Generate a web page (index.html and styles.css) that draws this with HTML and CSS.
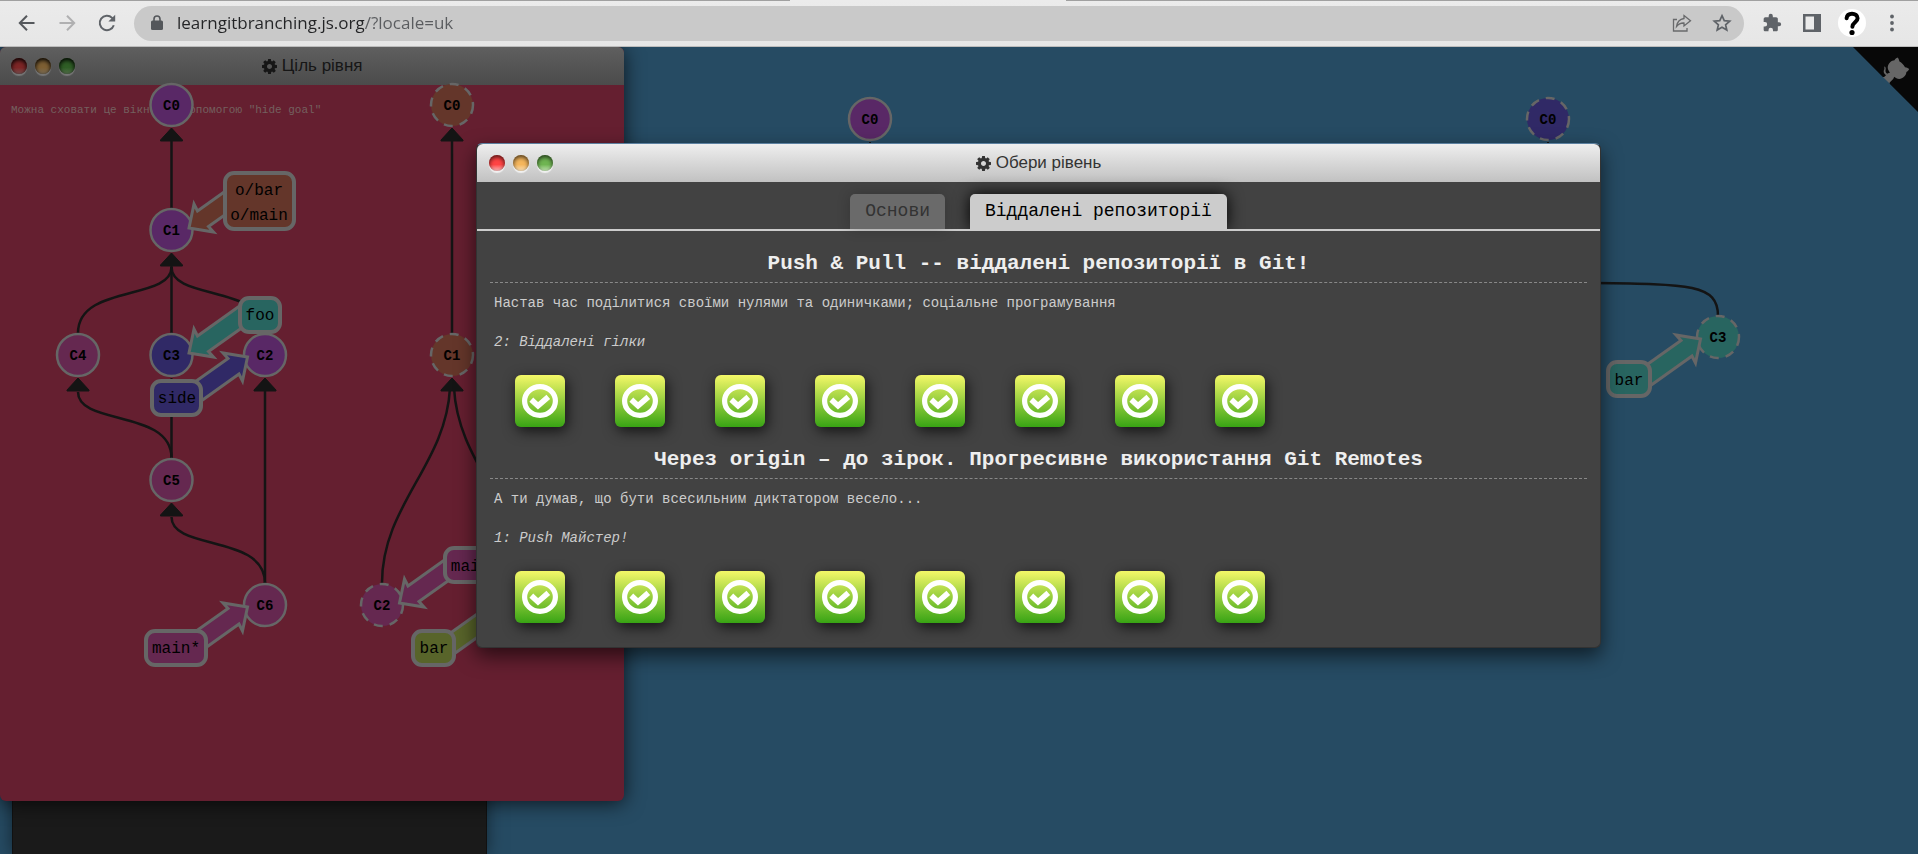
FILE: index.html
```html
<!DOCTYPE html>
<html lang="uk">
<head>
<meta charset="utf-8">
<meta name="viewport" content="width=device-width, initial-scale=1">
<title>Learn Git Branching</title>
<link rel="stylesheet" href="styles.css">
</head>
<body>
<svg class="defs" width="0" height="0" aria-hidden="true">
  <defs>
    <symbol id="cog" viewBox="0 0 1536 1536"><path d="M1024 768q0-106-75-181t-181-75-181 75-75 181 75 181 181 75 181-75 75-181zm512-109v222q0 12-8 23t-20 13l-185 28q-19 54-39 91 35 50 107 138 10 12 10 25t-9 23q-27 37-99 108t-94 71q-12 0-26-9l-138-108q-44 23-91 38-16 136-29 186-7 28-36 28h-222q-14 0-24.5-8.5t-11.5-21.5l-28-184q-49-16-90-37l-141 107q-10 9-25 9-14 0-25-11-126-114-165-168-7-10-7-23 0-12 8-23 15-21 51-66.5t54-70.5q-27-50-41-99l-183-27q-13-2-21-12.500t-8-23.500v-222q0-12 8-23t19-13l186-28q14-46 39-92-40-57-107-138-10-12-10-24 0-10 9-23 26-36 98.500-107.500t94.500-71.500q13 0 26 10l138 107q44-23 91-38 16-136 29-186 7-28 36-28h222q14 0 24.500 8.500t11.500 21.500l28 184q49 16 90 37l142-107q9-9 24-9 13 0 25 10 129 119 165 170 7 8 7 22 0 12-8 23-15 21-51 66.500t-54 70.500q26 50 41 98l183 28q13 2 21 12.500t8 23.500z"/></symbol>
    <symbol id="done" viewBox="0 0 36 34"><ellipse cx="18" cy="17" rx="15.400" ry="14.400" fill="none" stroke="#fff" stroke-width="5.200"/><path d="M9.300 15.600 16 21.800 26.300 12.800" fill="none" stroke="#fff" stroke-width="5.600"/></symbol>
    <path id="head" class="head" d="M0 0 11 12V13H-11V12Z"/>
    <path id="link" class="edge" d="M0 0C0 -49 93.500 -32 93.500 -66"/>
    <polygon id="pointer" points="73,-52.500 26,-19 22.500,-26 17.500,-2 42,2 37,-3.500 73,-29"/>
  </defs>
</svg>

<header class="toolbar">
  <button class="tool" aria-label="Назад"><svg width="20" height="20" viewBox="0 0 20 20"><path d="M17.500 10H3.500M10 2.800 2.800 10l7.200 7.200" fill="none" stroke="#55585c" stroke-width="2"/></svg></button>
  <button class="tool" aria-label="Вперед"><svg width="20" height="20" viewBox="0 0 20 20"><path d="M2.500 10h14M10 2.800l7.200 7.200-7.200 7.200" fill="none" stroke="#b0b0b1" stroke-width="2"/></svg></button>
  <button class="tool" aria-label="Оновити"><svg width="20" height="20" viewBox="0 0 20 20"><path d="M16.800 12.200A7.200 7.200 0 1 1 15.100 4.900L17 6.800" fill="none" stroke="#5f6368" stroke-width="2"/><path d="M18.200 1.800V8.600H11.400Z" fill="#5f6368"/></svg></button>
  <form class="address">
    <svg width="12" height="16" viewBox="0 0 12 16"><path d="M1.500 5.500h9q1.500 0 1.500 1.500v6.500q0 1.500-1.500 1.500h-9Q0 15 0 13.500V7q0-1.500 1.500-1.500Z" fill="#54575b"/><path d="M3 6.500V4a3 3 0 0 1 6 0v2.500" fill="none" stroke="#54575b" stroke-width="1.600"/></svg>
    <input class="url" type="text" aria-label="Адреса" value="learngitbranching.js.org/?locale=uk">
    <button type="button" class="tool" aria-label="Поділитися"><svg width="20" height="20" viewBox="0 0 20 20"><path d="M5 6.500H1.500v11.500h13.500v-3M12 2.500l6.500 5.200L12 13V10q-4.500-.3-7.500 3.500Q5.500 6.500 12 5.500Z" fill="none" stroke="#68696b" stroke-width="1.300"/></svg></button>
    <button type="button" class="tool" aria-label="Закладка"><svg width="20" height="20" viewBox="0 0 20 20"><path d="M10 2.700l2.250 5 5.450.5-4.100 3.600 1.200 5.300L10 14.300l-4.800 2.800 1.200-5.300L2.300 8.200l5.450-.5Z" fill="none" stroke="#5f6368" stroke-width="1.700"/></svg></button>
  </form>
  <button class="tool" aria-label="Розширення"><svg width="20" height="20" viewBox="0 0 24 24"><path d="M20.500 11H19V7c0-1.100-.9-2-2-2h-4V3.500a2.500 2.500 0 0 0-5 0V5H4a2 2 0 0 0-2 2v3.800h1.500a2.700 2.700 0 0 1 0 5.400H2V20c0 1.100.9 2 2 2h3.800v-1.500a2.700 2.700 0 0 1 5.400 0V22H17c1.100 0 2-.9 2-2v-4h1.500a2.500 2.500 0 0 0 0-5Z" fill="#5f6368"/></svg></button>
  <button class="tool" aria-label="Бічна панель"><svg width="20" height="20" viewBox="0 0 20 20"><path d="M1 1h18v18H1Z" fill="#5f6368"/><path d="M3.500 3.500H12v13H3.500Z" fill="#ebebeb"/></svg></button>
  <button class="tool profile" aria-label="Профіль"><svg width="28" height="28" viewBox="0 0 28 28"><circle cx="14" cy="14" r="14" fill="#fff"/><path d="M8.600 9.300C9 6 11 4.800 14 4.800c3 0 5.600 1.500 5.600 4.500 0 3.900-5.200 4.200-5.200 8.500" fill="none" stroke="#000" stroke-width="4" stroke-linecap="round"/><circle cx="14" cy="23.500" r="2.600"/></svg></button>
  <button class="tool" aria-label="Меню"><svg width="20" height="20" viewBox="0 0 20 20" fill="#5f6368"><circle cx="10" cy="3.500" r="1.900"/><circle cx="10" cy="10" r="1.900"/><circle cx="10" cy="16.500" r="1.900"/></svg></button>
</header>

<main class="desktop">
  <svg class="canvas" width="100%" height="100%">
    <g transform="translate(0 -47)">
      <use href="#head" x="870" y="142"/>
      <use href="#head" x="1548" y="142"/>
      <path class="edge" d="M1590 283C1690 284 1718 284 1718 316"/>
      <circle class="node purple" cx="870" cy="119" r="21"/><text class="sha" x="870" y="124">C0</text>
      <circle class="node indigo remote" cx="1548" cy="119" r="21"/><text class="sha" x="1548" y="124">C0</text>
      <circle class="node teal remote" cx="1718" cy="337" r="21"/><text class="sha" x="1718" y="342">C3</text>
      <use href="#pointer" class="pointer teal" transform="translate(1718 337) rotate(180)"/>
      <rect class="tag teal" x="1608" y="362" width="42" height="34" rx="9"/><text class="ref" x="1629" y="385">bar</text>
    </g>
  </svg>

  <a class="corner" href="#" aria-label="GitHub"><svg width="65" height="65" viewBox="0 0 250 250"><path d="M0 0 115 115 130 115 142 142 250 250 250 0Z" fill="#080808"/><path d="M128.300 109C113.800 99.700 119 89.600 119 89.600 122 82.700 120.500 78.600 120.500 78.600 119.200 72 123.400 76.300 123.400 76.300 127.300 80.900 125.500 87.300 125.500 87.300 122.900 97.600 130.600 101.900 134.400 103.200" fill="#666"/><path d="M115 115C114.900 115.100 118.700 116.500 119.800 115.400L133.700 101.600C136.900 99.200 139.900 98.400 142.200 98.600 133.800 88 127.500 74.400 143.800 58 148.500 53.400 154 51.200 159.700 51 160.300 49.400 163.200 43.600 171.400 40.100 171.400 40.100 176.100 42.500 178.800 56.200 183.100 58.600 187.200 61.800 190.900 65.400 194.500 69 197.700 73.200 200.100 77.600 213.800 80.200 216.300 84.900 216.300 84.900 212.700 93.100 206.900 96 205.400 96.600 205.100 102.400 203 107.800 198.300 112.500 181.900 128.900 168.300 122.500 157.700 114.100 157.900 116.900 156.700 120.900 152.700 124.900L141 136.500C139.800 137.700 141.600 141.900 141.800 141.800Z" fill="#666"/></svg></a>

  <div class="terminal"></div>

  <section class="window goal">
    <div class="titlebar">
      <div class="lights"><button class="light red" aria-label="Закрити"></button><button class="light amber" aria-label="Згорнути"></button><button class="light green" aria-label="Розгорнути"></button></div>
      <h2 class="title"><svg class="cog"><use href="#cog"/></svg>Ціль рівня</h2>
    </div>
    <div class="goal-body">
      <p class="hint">Можна сховати це вікно за допомогою "hide goal"</p>
      <svg class="tree" width="100%" height="716">
        <g transform="translate(0 -85)">
          <path class="edge" d="M171.500 209V138M171.500 333V264M171.500 458V388M265 583V388M452 333V138"/>
          <use href="#link" transform="translate(78 333)"/>
          <use href="#link" transform="translate(265 333) scale(-1 1)"/>
          <use href="#link" transform="translate(171.500 458) scale(-1 1)"/>
          <use href="#link" transform="translate(265 583) scale(-1 1)"/>
          <path class="edge" d="M382 583C382 505 446 465 450 388M522 583C522 505 458 465 454 388"/>
          <use href="#head" x="171.500" y="128"/>
          <use href="#head" x="171.500" y="253"/>
          <use href="#head" x="78" y="378"/>
          <use href="#head" x="265" y="378"/>
          <use href="#head" x="171.500" y="378"/>
          <use href="#head" x="171.500" y="503"/>
          <use href="#head" x="452" y="128"/>
          <use href="#head" x="452" y="378"/>

          <circle class="node purple" cx="171.500" cy="105" r="21"/><text class="sha" x="171.500" y="110">C0</text>
          <circle class="node purple" cx="171.500" cy="230" r="21"/><text class="sha" x="171.500" y="235">C1</text>
          <circle class="node magenta" cx="78" cy="355" r="21"/><text class="sha" x="78" y="360">C4</text>
          <circle class="node indigo" cx="171.500" cy="355" r="21"/><text class="sha" x="171.500" y="360">C3</text>
          <circle class="node purple" cx="265" cy="355" r="21"/><text class="sha" x="265" y="360">C2</text>
          <circle class="node magenta" cx="171.500" cy="480" r="21"/><text class="sha" x="171.500" y="485">C5</text>
          <circle class="node magenta" cx="265" cy="605" r="21"/><text class="sha" x="265" y="610">C6</text>
          <circle class="node rust remote" cx="452" cy="105" r="21"/><text class="sha" x="452" y="110">C0</text>
          <circle class="node rust remote" cx="452" cy="355" r="21"/><text class="sha" x="452" y="360">C1</text>
          <circle class="node magenta remote" cx="382" cy="605" r="21"/><text class="sha" x="382" y="610">C2</text>

          <use href="#pointer" class="pointer rust" transform="translate(171.500 230)"/>
          <rect class="tag rust" x="225" y="173" width="69" height="56" rx="9"/>
          <text class="ref" x="259" y="195">o/bar</text><text class="ref" x="259" y="220">o/main</text>
          <use href="#pointer" class="pointer teal" transform="translate(171.500 355)"/>
          <rect class="tag teal" x="240" y="298" width="40" height="34" rx="9"/><text class="ref" x="260" y="320">foo</text>
          <use href="#pointer" class="pointer indigo" transform="translate(265 355) rotate(180)"/>
          <rect class="tag indigo" x="152" y="381" width="49" height="34" rx="9"/><text class="ref" x="177" y="403">side</text>
          <use href="#pointer" class="pointer magenta" transform="translate(265 605) rotate(180)"/>
          <rect class="tag magenta" x="146" y="631" width="60" height="34" rx="9"/><text class="ref" x="176" y="653">main*</text>
          <use href="#pointer" class="pointer magenta" transform="translate(382 605)"/>
          <rect class="tag magenta" x="445" y="548" width="51" height="34" rx="9"/><text class="ref" x="470" y="571">main</text>
          <use href="#pointer" class="pointer lime" transform="translate(522 605) rotate(180)"/>
          <rect class="tag lime" x="413" y="631" width="41" height="34" rx="9"/><text class="ref" x="434" y="653">bar</text>
        </g>
      </svg>
    </div>
  </section>

  <section class="window levels">
    <div class="titlebar">
      <div class="lights"><button class="light red" aria-label="Закрити"></button><button class="light amber" aria-label="Згорнути"></button><button class="light green" aria-label="Розгорнути"></button></div>
      <h2 class="title"><svg class="cog"><use href="#cog"/></svg>Обери рівень</h2>
    </div>
    <div class="levels-body">
      <nav class="tabs"><button class="tab">Основи</button><button class="tab selected">Віддалені репозиторії</button></nav>
      <section class="series">
        <h1 class="series-name">Push &amp; Pull -- віддалені репозиторії в Git!</h1>
        <p class="about">Настав час поділитися своїми нулями та одиничками; соціальне програмування</p>
        <p class="status">2: Віддалені гілки</p>
        <div class="icons">
          <button class="level" aria-label="1"><svg><use href="#done"/></svg></button><button class="level" aria-label="2"><svg><use href="#done"/></svg></button><button class="level" aria-label="3"><svg><use href="#done"/></svg></button><button class="level" aria-label="4"><svg><use href="#done"/></svg></button><button class="level" aria-label="5"><svg><use href="#done"/></svg></button><button class="level" aria-label="6"><svg><use href="#done"/></svg></button><button class="level" aria-label="7"><svg><use href="#done"/></svg></button><button class="level" aria-label="8"><svg><use href="#done"/></svg></button>
        </div>
      </section>
      <section class="series">
        <h1 class="series-name">Через origin – до зірок. Прогресивне використання Git Remotes</h1>
        <p class="about">А ти думав, що бути всесильним диктатором весело...</p>
        <p class="status">1: Push Майстер!</p>
        <div class="icons">
          <button class="level" aria-label="1"><svg><use href="#done"/></svg></button><button class="level" aria-label="2"><svg><use href="#done"/></svg></button><button class="level" aria-label="3"><svg><use href="#done"/></svg></button><button class="level" aria-label="4"><svg><use href="#done"/></svg></button><button class="level" aria-label="5"><svg><use href="#done"/></svg></button><button class="level" aria-label="6"><svg><use href="#done"/></svg></button><button class="level" aria-label="7"><svg><use href="#done"/></svg></button><button class="level" aria-label="8"><svg><use href="#done"/></svg></button>
        </div>
      </section>
    </div>
  </section>
</main>
</body>
</html>
```

FILE: styles.css
```css
* { box-sizing: border-box; }

body {
  margin: 0;
  height: 100vh;
  display: flex;
  flex-direction: column;
  overflow: hidden;
  font-family: "Liberation Mono", monospace;
}

h1, h2, p { margin: 0; font-weight: normal; }

button { border: 0; padding: 0; margin: 0; background: none; font: inherit; }

.defs { position: absolute; }

/* browser toolbar */
.toolbar {
  display: flex;
  align-items: center;
  gap: 20px;
  height: 47px;
  padding: 0 16px 0 17px;
  border-bottom: 1px solid #bcbcbc;
  background:
    linear-gradient(to right, #a0a0a0 41.2%, #ebebeb 41.2%, #ebebeb 55.6%, #a0a0a0 55.6%) top / 100% 1px no-repeat,
    linear-gradient(#ebebeb, #e6e6e6);
}

.tool { display: flex; }

.profile { margin: 0 -4px; }

.address {
  flex: 1;
  display: flex;
  align-items: center;
  gap: 20px;
  height: 35px;
  margin-left: -3px;
  margin-right: -2px;
  padding: 0 12px 0 17px;
  border-radius: 18px;
  background: #c9c9c9;
}

.url {
  flex: 1;
  min-width: 0;
  margin-left: -6px;
  padding: 0;
  border: 0;
  outline: 0;
  font: 17px/24px "Open Sans", sans-serif;
  color: transparent;
  background: linear-gradient(to right, #232426 187px, #5a5c5f 187px);
  -webkit-background-clip: text;
  background-clip: text;
}

/* desktop */
.desktop {
  flex: 1;
  position: relative;
  overflow: hidden;
  background: #264b63;
}

.canvas { display: block; }

.corner { position: absolute; top: 0; right: 0; display: block; height: 65px; }

.terminal {
  position: absolute;
  top: 0;
  bottom: 0;
  left: 12px;
  width: 475px;
  border: solid #111;
  border-width: 0 1px;
  background: #1a1a1a;
  box-shadow: 0 0 16px rgba(0, 0, 0, .5);
}

/* git tree */
.edge { fill: none; stroke: #141414; stroke-width: 2.5; }
.head { fill: #141414; stroke: #141414; stroke-linejoin: round; }
.node { stroke: #666; stroke-width: 2.5; }
.remote { stroke-dasharray: 9 7; }
.tag { stroke: #666; stroke-width: 4; }
.pointer { stroke: #666; stroke-width: 3; }
.purple { fill: #592866; }
.magenta { fill: #652850; }
.indigo { fill: #302966; }
.teal { fill: #286560; }
.rust { fill: #64362a; }
.lime { fill: #58642a; }
.sha { font-size: 14px; font-weight: bold; text-anchor: middle; }
.ref { font-size: 16px; text-anchor: middle; }

/* windows */
.window { position: absolute; border-radius: 6px; }

.titlebar {
  display: grid;
  grid-template-columns: 1fr auto 1fr;
  align-items: center;
  height: 38px;
  padding: 0 12px;
  border-radius: 6px 6px 0 0;
}

.lights { display: flex; gap: 8px; }

.light {
  width: 16px;
  height: 16px;
  border-radius: 50%;
  box-shadow: inset 0 2px 4px rgba(0, 0, 0, .7), 0 2px 1px rgba(255, 255, 255, .7);
}

.red { background: linear-gradient(#f44 60%, #fbb); }
.amber { background: linear-gradient(#f5b65c 60%, #fde2b8); }
.green { background: linear-gradient(#6fb552 60%, #c4e6b4); }

.title {
  display: flex;
  align-items: center;
  gap: 5px;
  font: 17px/24px "Liberation Sans", sans-serif;
  color: #333;
}

.cog { width: 15px; height: 15px; fill: currentColor; }

.goal {
  top: 0;
  left: 0;
  width: 32.55%;
  background: #651f30;
  box-shadow: 0 2px 20px rgba(0, 0, 0, .7);
}

.goal .titlebar { padding: 0 11px; background: linear-gradient(#5f5f5f, #4b4b4b); }
.goal .title { color: #161616; }
.goal .light { box-shadow: inset 0 2px 4px #000, 0 2px 1px #777; }
.goal .red { background: linear-gradient(#7d2626 60%, #7a5050); }
.goal .amber { background: linear-gradient(#7d5f33 60%, #7a6c55); }
.goal .green { background: linear-gradient(#2f5e26 60%, #55704c); }

.goal-body { display: grid; overflow: hidden; border-radius: 0 0 6px 6px; }
.goal-body > * { grid-area: 1 / 1; }
.tree { display: block; overflow: visible; }
.goal-body { overflow: visible; }

.hint {
  padding: 17px 11px;
  font-size: 11px;
  line-height: 16px;
  color: #74605f;
}

.levels {
  top: 96px;
  left: 476px;
  right: 317px;
  border: 1px solid #333;
  border-top-color: #5b80a0;
  background: #424242;
  box-shadow: 0 8px 20px rgba(0, 0, 0, .6);
}

.levels .titlebar { background: linear-gradient(#eee, #c1c1c1); }

.levels-body { padding-bottom: 24px; }

.tabs {
  display: flex;
  justify-content: center;
  gap: 25px;
  height: 49px;
  padding-top: 12px;
  border-bottom: 2px solid #ccc;
}

.tab {
  padding: 0 15px;
  border-radius: 5px 5px 0 0;
  font-size: 18px;
  line-height: 35px;
  color: #333;
  background: #6a6a6a;
  box-shadow: 0 0 14px rgba(0, 0, 0, .2);
}

.selected {
  color: #000;
  background: #ccc;
  box-shadow: 0 0 16px #000;
  clip-path: inset(-20px -20px 0);
}

.series { display: flex; flex-direction: column; padding: 0 13px; }

.series-name {
  padding-top: 14px;
  border-bottom: 1px dashed #888;
  font-size: 21px;
  font-weight: bold;
  line-height: 37px;
  text-align: center;
  color: #eee;
}

.about, .status {
  padding: 0 4px;
  font-size: 14px;
  line-height: 39px;
  color: #ccc;
}

.about { line-height: 40px; }

.status { font-style: italic; }

.icons { display: flex; gap: 50px; padding: 13px 25px 0; }

.level {
  display: grid;
  place-items: center;
  width: 50px;
  height: 52px;
  border-radius: 6px;
  background: linear-gradient(#f4f868, #38a414);
  box-shadow: 2px 4px 14px rgba(0, 0, 0, .7);
}

.level svg { width: 36px; height: 34px; }
```
